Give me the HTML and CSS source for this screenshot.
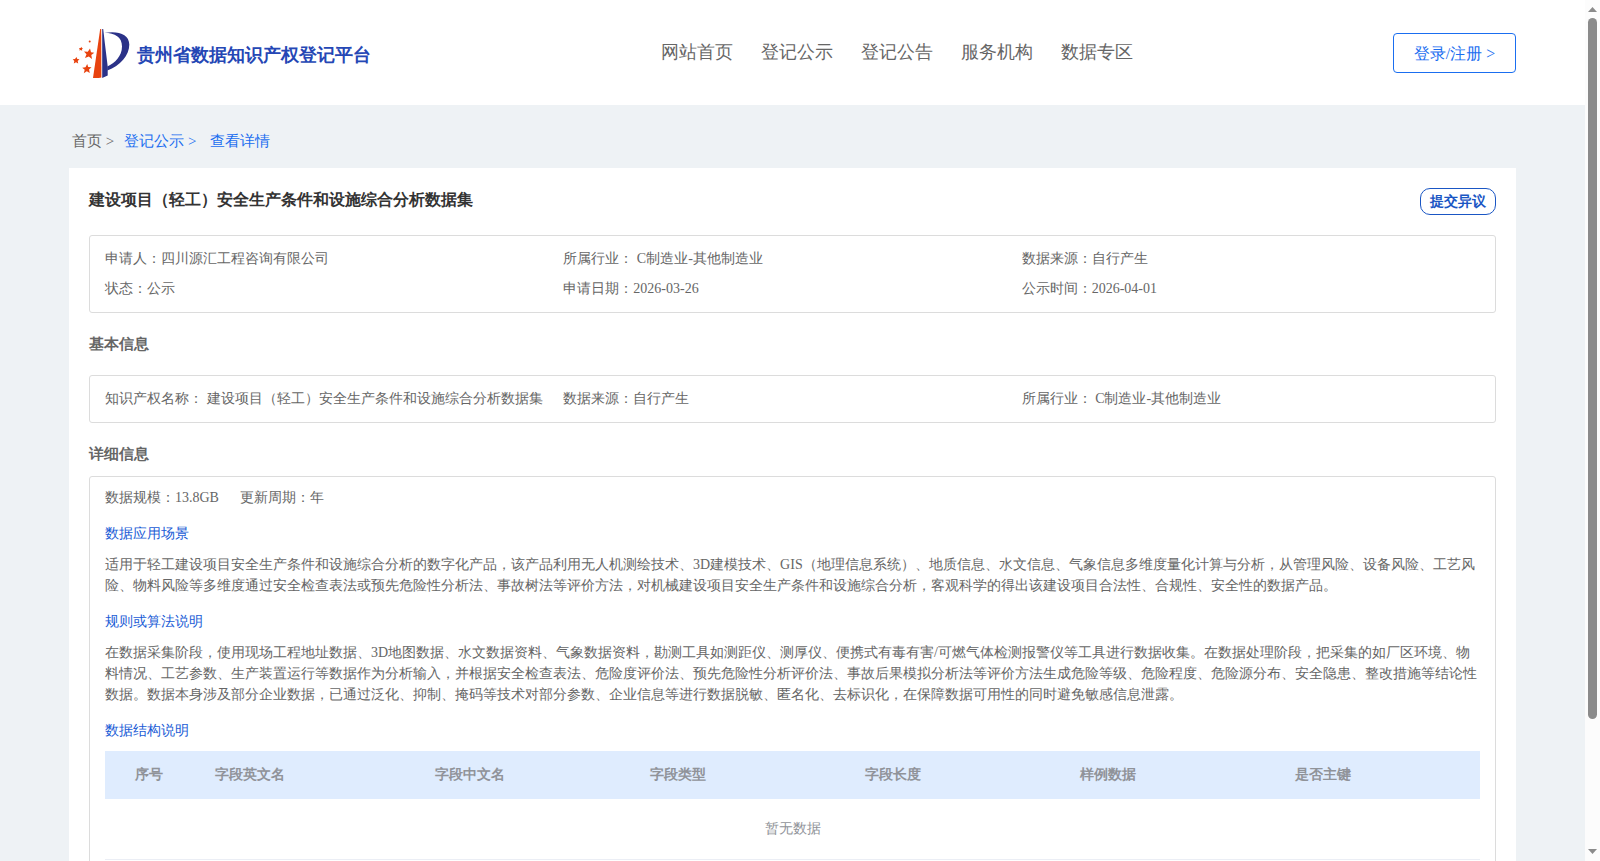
FILE: index.html
```html
<!DOCTYPE html>
<html lang="en">
<head>
<meta charset="utf-8">
<title>贵州省数据知识产权登记平台</title>
<link rel="stylesheet" href="styles.css">
</head>
<body>
<div class="page">
  <header class="header">
    <a class="brand" href="#">
      <svg class="brand-mark" viewBox="0 0 58 50" aria-hidden="true">
        <path fill="#e8430f" d="M28.200 1h1l.2 48.500q-4 1-8.400.5z"/>
        <path fill="#2b3288" d="M30.200 1h1l1.500 13 3 24.500v9l-5.500 2.500z"/>
        <path fill="#2b3288" d="M32.500 4.800C46 2.500 57.300 6 57.300 16.500c0 11-9 21-22 26v-4C43 35 50 28 50 18.500 50 9 43 5.200 32.500 4.800z"/>
        <g fill="#e8430f">
          <path d="M18 20.500l1 3.800 3.300.5-3 2.200.7 4-3.200-2.500-3.800 1.500 1.500-3.800-2.500-2.700 3.800.2z"/>
          <path d="M15.200 36l1 3 3.300.3-2.500 2.200.8 3.500-3-1.800-3 2 .9-3.500-2.500-2 3.300-.4z"/>
          <path d="M4.500 29l.8 2 2.200.2-1.800 1.700.5 2.600L4 34.200l-2.200 1.300.5-2.600L.7 31.200l2.300-.2z"/>
          <path d="M9.500 18.700l.3 1.300 1.200.3-1 1 .2 1.500-1.400-.8-1.500.6.400-1.400-.8-1 1.600-.2z"/>
          <circle cx="17.700" cy="13.500" r="1"/>
        </g>
      </svg>
      <span class="brand-name">贵州省数据知识产权登记平台</span>
    </a>
    <nav class="nav">
      <a href="#">网站首页</a>
      <a href="#">登记公示</a>
      <a href="#">登记公告</a>
      <a href="#">服务机构</a>
      <a href="#">数据专区</a>
    </nav>
    <button class="login" type="button">登录/注册 &gt;</button>
  </header>

  <main class="main">
    <nav class="crumbs">
      <a class="crumb-home" href="#">首页 &gt;</a>
      <a href="#">登记公示 &gt;</a>
      <a class="crumb-last" href="#">查看详情</a>
    </nav>

    <article class="card">
      <div class="card-head">
        <h1>建设项目（轻工）安全生产条件和设施综合分析数据集</h1>
        <button class="objection" type="button">提交异议</button>
      </div>

      <div class="box facts">
        <span>申请人：四川源汇工程咨询有限公司</span>
        <span>所属行业： C制造业-其他制造业</span>
        <span>数据来源：自行产生</span>
        <span>状态：公示</span>
        <span>申请日期：2026-03-26</span>
        <span>公示时间：2026-04-01</span>
      </div>

      <h2>基本信息</h2>
      <div class="box facts">
        <span>知识产权名称： 建设项目（轻工）安全生产条件和设施综合分析数据集</span>
        <span>数据来源：自行产生</span>
        <span>所属行业： C制造业-其他制造业</span>
      </div>

      <h2 class="detail-title">详细信息</h2>
      <div class="box detail">
        <div class="meta"><span>数据规模：13.8GB</span><span>更新周期：年</span></div>
        <h3>数据应用场景</h3>
        <p>适用于轻工建设项目安全生产条件和设施综合分析的数字化产品，该产品利用无人机测绘技术、3D建模技术、GIS（地理信息系统）、地质信息、水文信息、气象信息多维度量化计算与分析，从管理风险、设备风险、工艺风险、物料风险等多维度通过安全检查表法或预先危险性分析法、事故树法等评价方法，对机械建设项目安全生产条件和设施综合分析，客观科学的得出该建设项目合法性、合规性、安全性的数据产品。</p>
        <h3>规则或算法说明</h3>
        <p>在数据采集阶段，使用现场工程地址数据、3D地图数据、水文数据资料、气象数据资料，勘测工具如测距仪、测厚仪、便携式有毒有害/可燃气体检测报警仪等工具进行数据收集。在数据处理阶段，把采集的如厂区环境、物料情况、工艺参数、生产装置运行等数据作为分析输入，并根据安全检查表法、危险度评价法、预先危险性分析评价法、事故后果模拟分析法等评价方法生成危险等级、危险程度、危险源分布、安全隐患、整改措施等结论性数据。数据本身涉及部分企业数据，已通过泛化、抑制、掩码等技术对部分参数、企业信息等进行数据脱敏、匿名化、去标识化，在保障数据可用性的同时避免敏感信息泄露。</p>
        <h3>数据结构说明</h3>
        <table>
          <colgroup><col class="col-index"><col class="col-en"><col><col><col><col><col class="col-key"></colgroup>
          <thead>
            <tr><th>序号</th><th>字段英文名</th><th>字段中文名</th><th>字段类型</th><th>字段长度</th><th>样例数据</th><th>是否主键</th></tr>
          </thead>
          <tbody>
            <tr><td colspan="7">暂无数据</td></tr>
          </tbody>
        </table>
      </div>
    </article>
  </main>
</div>
<div class="scrollbar" aria-hidden="true">
  <svg viewBox="0 0 9 5"><path d="M0 5L4.500 0 9 5z"/></svg>
  <div class="track"><div class="thumb"></div></div>
  <svg viewBox="0 0 9 5"><path d="M0 0h9L4.500 5z"/></svg>
</div>
</body>
</html>
```

FILE: styles.css
```css
* { box-sizing: border-box; }

body {
  margin: 0;
  height: 100vh;
  overflow: hidden;
  display: grid;
  grid-template-columns: 1fr 15px;
  background: #eef2f5;
  color: #666;
  font-family: "Liberation Serif", serif;
  font-size: 14px;
}

a { color: inherit; text-decoration: none; }
button { font-family: inherit; background: #fff; cursor: pointer; }
h1, h2, h3, p { margin: 0; }

.page { min-width: 0; overflow: hidden; }

.header {
  display: grid;
  grid-template-columns: 1fr auto 1fr;
  align-items: center;
  height: 105px;
  padding: 0 69px;
  background: #fff;
}

.brand { display: flex; align-items: center; gap: 7px; padding-left: 3px; }
.brand-mark { width: 58px; height: 50px; }
.brand-name { color: #2547b5; font-size: 18px; font-weight: 700; line-height: 24px; padding-top: 4px; }

.nav { display: flex; gap: 28px; padding: 0 0 2px 208px; font-size: 18px; line-height: 24px; }

.login {
  justify-self: end;
  width: 123px;
  height: 40px;
  padding: 3px 0 0;
  border: 1px solid #1a6ef0;
  border-radius: 4px;
  color: #1a6ef0;
  font-size: 16px;
}

.main { padding: 0 69px; }

.crumbs {
  display: flex;
  align-items: center;
  gap: 10px;
  height: 63px;
  padding: 10px 3px 0;
  color: #1a6ef0;
  font-size: 15px;
}
.crumb-home { color: #666; }
.crumb-last { padding-left: 4px; }

.card { padding: 20px; background: #fff; }
.card-head { display: flex; justify-content: space-between; height: 47px; }
.card-head h1 { color: #333; font-size: 16px; line-height: 24px; }
.objection {
  width: 76px;
  height: 27px;
  padding: 0;
  border: 1px solid #1a56c4;
  border-radius: 10px;
  color: #1a56c4;
  font-size: 14px;
  font-weight: 700;
}

.box { border: 1px solid #dcdcdc; border-radius: 3px; }
.facts {
  display: grid;
  grid-template-columns: repeat(3, 1fr);
  padding: 8px 15px;
  line-height: 30px;
  white-space: nowrap;
}

h2 { font-size: 15px; line-height: 62px; }
.detail-title { line-height: 53px; padding-top: 5px; height: 53px; }

.detail { padding: 6px 15px 40px; line-height: 21px; }
.meta { display: flex; gap: 21px; margin-bottom: 10px; line-height: 30px; }
h3 { color: #1a5cd6; font-size: 14px; font-weight: 400; line-height: 21px; }
p { margin: 10px 0 15px; }

table { width: 100%; table-layout: fixed; border-collapse: collapse; margin-top: 10px; }
.col-index { width: 88px; }
.col-en { width: 220px; }
.col-key { width: 207px; }
th { height: 48px; padding: 0 0 2px 22px; background: #dfecfe; color: #909399; text-align: left; }
th:first-child { padding-left: 0; text-align: center; }
td { height: 60px; padding: 0; border-bottom: 1px solid #ebeef5; color: #909399; text-align: center; }

.scrollbar {
  display: flex;
  flex-direction: column;
  align-items: center;
  gap: 6px;
  padding: 7px 0;
  background: #fcfcfc;
}
.scrollbar svg { width: 9px; height: 5px; fill: #8b8b8b; }
.track { flex: 1; width: 9px; }
.thumb { height: 85%; border-radius: 5px; background: #8b8b8b; }
```
